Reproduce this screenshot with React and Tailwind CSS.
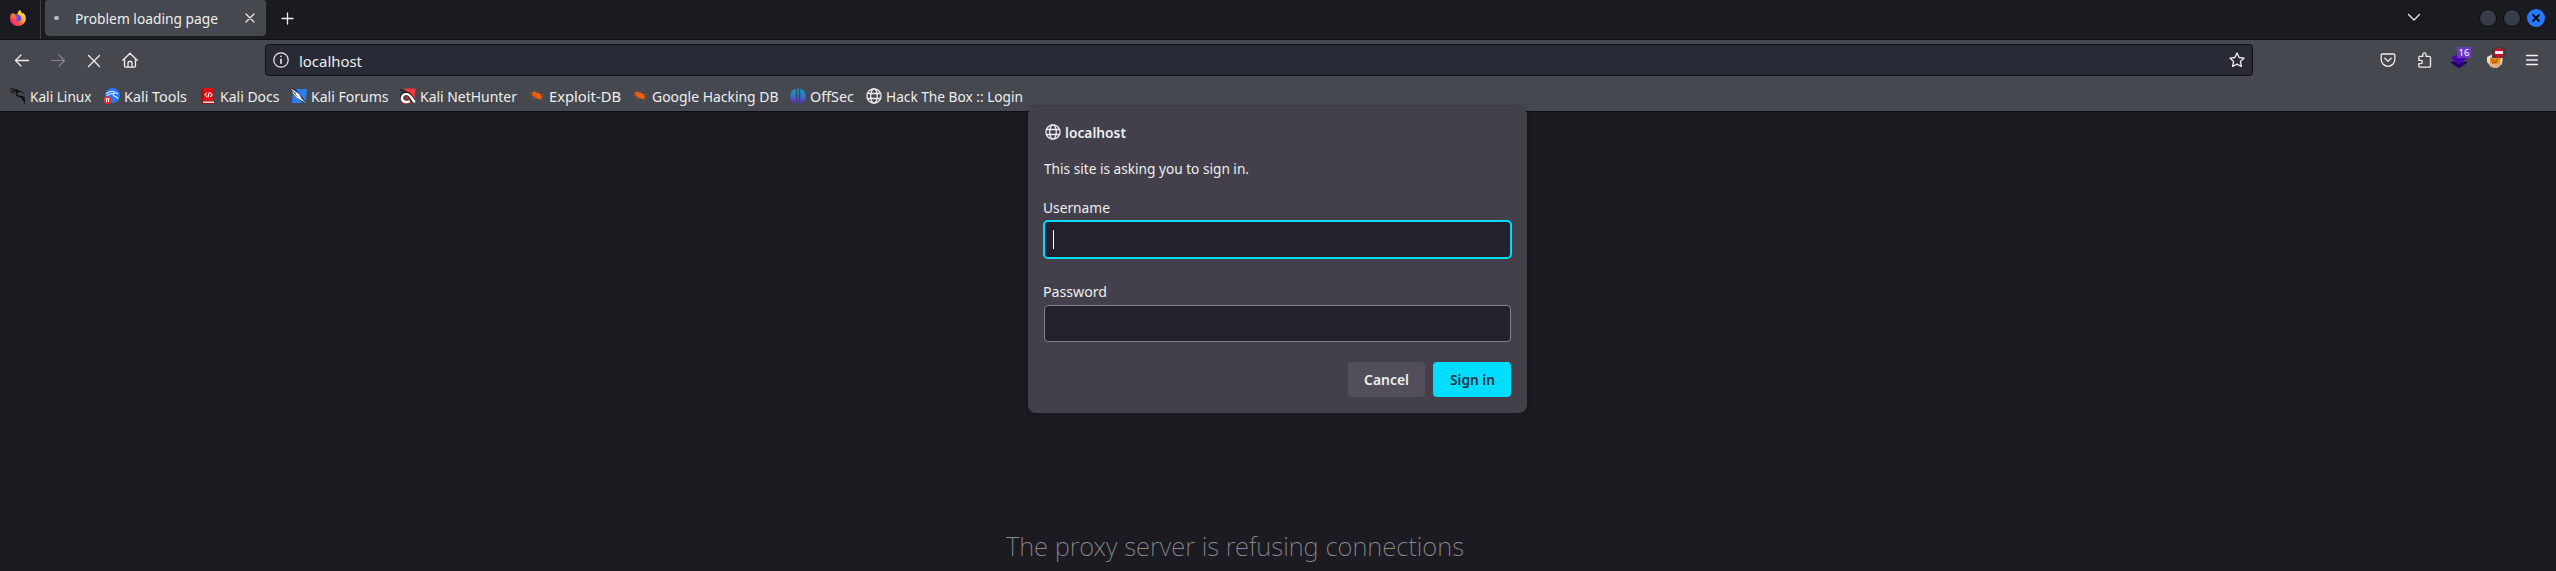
import { useLayoutEffect, useRef } from "react";

// Single line of text fitted horizontally to a given width.
function Fit({ w, className = "", children }) {
  const ref = useRef(null);
  useLayoutEffect(() => {
    const el = ref.current;
    el.style.transform = `scaleX(${w / el.getBoundingClientRect().width})`;
    return () => {
      el.style.transform = "";
    };
  }, [w]);
  return (
    <span className={`block shrink-0 whitespace-nowrap ${className}`} style={{ width: w }}>
      <span ref={ref} className="inline-block origin-left">{children}</span>
    </span>
  );
}

const line = { fill: "none", stroke: "currentColor", strokeLinecap: "round", strokeLinejoin: "round" };

function Firefox() {
  return (
    <svg className="h-4 w-4 shrink-0" viewBox="0 0 16 16">
      <defs>
        <linearGradient id="fx" x1="0.9" y1="0.1" x2="0.15" y2="0.9">
          <stop offset="0" stopColor="#fff44f" />
          <stop offset="0.4" stopColor="#ffb02a" />
          <stop offset="0.7" stopColor="#ff5a3a" />
          <stop offset="1" stopColor="#e8198a" />
        </linearGradient>
      </defs>
      <path fill="url(#fx)" d="M10 0c1 1 1.300 1.700 1.500 2.800.8.2 1.200.7 1.500 1.200V2.700C15 4.400 16 6.500 15.800 9c-.3 4-3.600 7-7.800 7-4.500 0-8-3.500-8-7.600C0 6 .8 4.300 1.900 3l.2 1.500 1.200-2 .8 1.700 3.300.3C7.500 2.600 8.500.9 10 0z" />
      <path fill="#7542e5" d="M4.500 6.200c1.300-1.500 4-1.900 5.700-.5 1.500 1.300 1.600 3.700.3 5-1.500 1.500-4 1.300-5.200-.2 1 .2 2.200 0 2.900-.7-1.500.1-2.800-.5-2.600-1.800.6-.3 1.500-.1 2 0 .4-.8.200-1-.8-1.200-.800-.2-1.500-.6-2.300-.6z" />
    </svg>
  );
}
function Globe({ className = "" }) {
  return (
    <svg className={`h-4 w-4 shrink-0 ${className}`} viewBox="0 0 16 16" {...line} strokeWidth="1.300">
      <circle cx="8" cy="8" r="7.100" />
      <ellipse cx="8" cy="8" rx="3.300" ry="7.100" />
      <path d="M1.500 5.500h13M1.500 10.500h13" />
    </svg>
  );
}
const Dragon = () => (
  <svg className="h-4 w-4 shrink-0 text-[#0c0d10]" viewBox="0 0 16 16" {...line}>
    <path strokeWidth="1" d="M.6.8C3 .6 5 1.200 7 2.500M.6 3.500C2.500 2.300 5 2.100 7 2.700M1.800 5.300C3.300 3.800 5 3.600 6.500 3.900" />
    <path strokeWidth="1.500" d="M6.500 2.300l2.700 1.200c-2 .6-3.200 2-2.800 3.300.6 1.800 2.800 1.300 4.800 1.900 2.200.6 2.800 2.200 3.300 4.300" />
    <path strokeWidth="1" d="M9 3.500c1.500-.3 2.700 0 3.700 1.200l1.300.4M11.500 8.700c1.500-.2 2.700.3 3.700 1.500M11 9.500c.3 2.300 2.300 2.300 3.200 3.800.3.700.2 1.400.1 2" />
  </svg>
);
const Tools = () => (
  <svg className="h-4 w-4 shrink-0" viewBox="0 0 16 16">
    <circle cx="8.500" cy="7.500" r="7.400" fill="#2777ff" />
    <path fill="none" stroke="#d8e6fb" strokeWidth="1.100" strokeLinecap="round" d="M2.500 5.500c3-2 5.500-2.500 7.500-2M3 7.500c2-1.500 4-2 6.500-2M9.500 3.500c2 1 .5 2-.3 3.200-.2 2 4 1.300 4.800 4M11 4.500l2.500 1" />
    <rect x="0" y="8.500" width="7" height="7.500" rx="2.500" fill="#e8262d" />
    <path stroke="#fff" strokeWidth="1" d="M1.500 10.800h4M2.600 11v3M4.500 11v3" />
  </svg>
);
const Docs = () => (
  <svg className="h-4 w-4 shrink-0" viewBox="0 0 16 16">
    <path fill="#a90c12" d="M1.500 1.500L3 0h11v13.500H1.500z" />
    <path fill="#df1016" d="M3.500 0h10v13h-10z" />
    <path fill="#e9e1df" d="M3 13.500h11v1.500H3z" />
    <path fill="#9f0a10" d="M1.500 13H3v2h11v1H2.700l-1.200-1z" />
    <path {...line} stroke="#fff" strokeWidth="1.100" d="M6.500 5L5 6.700l1.500 1.800M10.700 5l1.500 1.700-1.500 1.800M9.300 4.500L8 9" />
  </svg>
);
const Forums = () => (
  <svg className="h-4 w-4 shrink-0" viewBox="0 0 16 16">
    <path fill="#2b7cf5" d="M2.500 1H16l-1.500 14H1z" />
    <path fill="#1d2a40" d="M0 0l5 1.500L15 14l-3 1L1 5z" />
    <path fill="#f4f4f2" d="M.3.7l3.400 2 4.600 3.500 2.200 4.300 4.500 4.500-5.500-3-4-2.500L2 5.500z" />
    <path stroke="#29374d" strokeWidth=".7" d="M1 2.500l4 3M3 4.500l3 4" />
  </svg>
);
const NetHunter = () => (
  <svg className="h-4 w-4 shrink-0" viewBox="0 0 16 16">
    <path fill="#f2363b" d="M3 .5h12.500L14.500 12 9 5z" />
    <path fill="#d81d24" d="M1.500 10l10.500 5.500H2z" />
    <path fill="none" stroke="#221a20" strokeWidth="4" d="M2.300 10.500C1.500 5.500 5.500 4 9 6.500l4.500 6.500" />
    <path fill="none" stroke="#fff" strokeWidth="2.400" strokeLinecap="round" d="M9 13.500c-3 1.300-6.500.2-7-2.500C1.700 7 5 4.800 8.300 6.500c2.500 1.400 3.500 4 5.900 7" />
    <path stroke="#201a20" strokeWidth="1.300" d="M0 1.500l3.500 1.300L6 5" fill="none" />
    <path stroke="#e32329" strokeWidth="1.500" d="M5 9.500c1.500-.7 3 .5 4 2.500" fill="none" />
  </svg>
);
const Bug = () => (
  <svg className="h-4 w-4 shrink-0" viewBox="0 0 16 16">
    <path fill="#f2600c" d="M3 5c.4-1 1.700-1.500 2.900-1.200.9.200 1.400.9 2.300 1.200 1.800.2 3.200.8 3.900 2.200.6 1.200.8 2.500.4 3.600-1.500.3-2.900.1-4.200-.5C5.600 9.500 3.200 7.800 3 5z" />
    <path {...line} stroke="#a95424" strokeWidth=".7" d="M1.500 7.500l2.700-.5M3 10.500l3-1.500M5 12l2.500-2M5.500 2.500L6.700 4.500M8.500 3.500L10 5.500M12 7l2.800-.8M12.500 8.500l2.300.3M10.500 11l1 2M12.500 11l1.500 1M1.300 4.800h2" />
  </svg>
);
const OffSec = () => (
  <svg className="h-4 w-4 shrink-0" viewBox="0 0 16 16">
    <defs>
      <linearGradient id="os" x1="0" y1="0" x2="0" y2="16" gradientUnits="userSpaceOnUse">
        <stop offset="0" stopColor="#0aa5c0" />
        <stop offset=".5" stopColor="#2d78d2" />
        <stop offset="1" stopColor="#6a1fd0" />
      </linearGradient>
    </defs>
    <path fill="url(#os)" d="M5.700.8v14.400A7.500 7.500 0 0 1 5.700.8zM7.200.4h1.600v15.200H7.200zM10.300.8a7.500 7.500 0 0 1 0 14.400z" />
  </svg>
);

const bookmarks = [
  { Icon: Dragon, label: "Kali Linux", cell: "w-[94px]", w: 61.5 },
  { Icon: Tools, label: "Kali Tools", cell: "w-[95.500px]", w: 63 },
  { Icon: Docs, label: "Kali Docs", cell: "w-[91px]", w: 59.5 },
  { Icon: Forums, label: "Kali Forums", cell: "w-[109.500px]", w: 77.5 },
  { Icon: NetHunter, label: "Kali NetHunter", cell: "w-[129px]", w: 97 },
  { Icon: Bug, label: "Exploit-DB", cell: "w-[103px]", w: 72 },
  { Icon: Bug, label: "Google Hacking DB", cell: "w-[158px]", w: 126.5 },
  { Icon: OffSec, label: "OffSec", cell: "w-[76px]", w: 44 },
  { Icon: Globe, label: "Hack The Box :: Login", cell: "w-[160px]", w: 137 },
];

function TabStrip() {
  return (
    <div className="flex h-10 items-start border-b border-[#101115] bg-[#1a1b20]">
      <div className="flex h-[39px] w-[41px] items-center border-r border-[#3d3f45] pb-[3px] pl-[10px]">
        <Firefox />
      </div>
      <div className="ml-1 flex h-9 w-[221px] items-center rounded-b-[4px] rounded-t-[3px] bg-[#45484e]">
        <span className="ml-[9px] h-1 w-[5px] rounded-full bg-[#b9babc]" />
        <Fit w={143} className="ml-4 text-[14.667px]">Problem loading page</Fit>
        <svg className="ml-[27px] h-[10px] w-[10px]" viewBox="0 0 10 10" {...line} strokeWidth="1.200">
          <path d="M1 1l8 8M9 1L1 9" />
        </svg>
      </div>
      <svg className="ml-[15px] mt-3 h-[13px] w-[13px]" viewBox="0 0 13 13" {...line} strokeWidth="1.300">
        <path d="M6.500 1v11M1 6.500h11" />
      </svg>
      <svg className="ml-auto mr-[58px] mt-[13px] h-[10px] w-[14px]" viewBox="0 0 14 10" {...line} strokeWidth="1.300">
        <path d="M1.500 1.500L7 7l5.500-5.500" />
      </svg>
      <div className="mr-[11px] mt-[9px] flex gap-[6px]">
        <span className="h-[18px] w-[18px] rounded-full border border-[#0b0c0f] bg-[#363c49]" />
        <span className="h-[18px] w-[18px] rounded-full border border-[#0b0c0f] bg-[#363c49]" />
        <span className="flex h-[18px] w-[18px] items-center justify-center rounded-full bg-[#2777ff] text-[#080c18]">
          <svg className="h-2 w-2" viewBox="0 0 8 8" fill="none" stroke="currentColor" strokeWidth="2">
            <path d="M.5.5l7 7M7.500.5l-7 7" />
          </svg>
        </span>
      </div>
    </div>
  );
}

function NavBar() {
  return (
    <div className="flex h-10 items-center">
      <svg className="ml-[14px] h-4 w-4" viewBox="0 0 16 16" {...line} strokeWidth="1.300">
        <path d="M14.500 8.500H1.500M7 3L1.500 8.500 7 14" />
      </svg>
      <svg className="ml-5 h-4 w-4 text-[#85878b]" viewBox="0 0 16 16" {...line} strokeWidth="1.200">
        <path d="M1.500 8.500h13M9 3l5.500 5.500L9 14" />
      </svg>
      <svg className="ml-5 h-4 w-4" viewBox="0 0 16 16" {...line} strokeWidth="1.300">
        <path d="M2.500 3.500l11 11M13.500 3.500l-11 11" />
      </svg>
      <svg className="ml-5 h-4 w-4" viewBox="0 0 16 16" {...line} strokeWidth="1.300">
        <path d="M.9 8.300L8 1.300l7.100 7M2.500 7v6.800c0 .8.500 1.300 1.300 1.300h8.400c.8 0 1.300-.5 1.300-1.300V7M6 15v-4c0-.9.500-1.500 1.200-1.500h1.600c.7 0 1.200.6 1.200 1.500v4" />
      </svg>
      <div className="ml-[127px] flex h-8 w-[1988px] items-center rounded-[4px] border border-[#0e0f13] bg-[#282a36]">
        <svg className="ml-[7px] h-4 w-4" viewBox="0 0 16 16" {...line} strokeWidth="1.200">
          <circle cx="8" cy="8" r="7.200" />
          <path strokeWidth="1.600" d="M8 7.200v4M8 4.400v.1" />
        </svg>
        <Fit w={63} className="ml-[10px] pt-px text-[14.667px]">localhost</Fit>
        <svg className="ml-auto mr-[7px] h-4 w-4" viewBox="0 0 16 16" {...line} strokeWidth="1.300">
          <path d="M8 .9l2.100 4.600 5 .6-3.700 3.400 1 5L8 12.100l-4.400 2.400 1-5L.9 6.100l5-.6z" />
        </svg>
      </div>
      <div className="ml-auto mr-4 flex items-center">
        <svg className="mr-5 h-4 w-4" viewBox="0 0 16 16" {...line} strokeWidth="1.300">
          <path d="M2.500 2h11c.8 0 1.300.5 1.300 1.300V7.500a6.800 6.800 0 0 1-13.600 0V3.300C1.200 2.500 1.700 2 2.500 2zM4.800 6.300L8 9.400l3.200-3.100" />
        </svg>
        <svg className="mr-[17px] h-4 w-4" viewBox="0 0 16 16" {...line} strokeWidth="1.300">
          <path d="M2.800 8V5.200c0-.5.300-.9.900-.9h3.100V2.500a1.600 1.600 0 0 1 3.200 0v1.800h3.300c.7 0 1.200.5 1.200 1.200v8.400c0 .7-.5 1.200-1.200 1.200H4c-.7 0-1.200-.5-1.200-1.200v-2.200h1.900a1.700 1.700 0 0 0 0-3.400H2.800" />
        </svg>
        <div className="relative mr-4 h-5 w-5">
          <svg className="h-5 w-5" viewBox="0 0 20 20">
            <path fill="#21026b" d="M2 11.500l4 0 4 2 4-2h4v1.500l-8 5.500-8-5.500z" />
            <path fill="#4706b3" d="M10 3l8 5-8 6-8-6z" />
          </svg>
          <span className="absolute -top-[3px] left-2 flex h-[11px] w-[14px] items-center justify-center rounded-[1px] bg-[#6b3cc0] text-[9.500px] leading-none text-white">16</span>
        </div>
        <div className="relative mr-[19px] h-5 w-5">
          <svg className="h-5 w-5" viewBox="0 0 20 20">
            <path fill="#e9ddd0" d="M2 7l8-4 8 3-1 8-5 4-6-1-4-5z" />
            <path fill="#e0a878" d="M3 12l6 4 8-4-3 5-5 1-4-2z" />
            <path fill="#f58a1f" d="M5 8l4-2 4 1 3 0-1 6-5 2-5-2z" />
            <path stroke="#6b3c17" strokeWidth=".8" fill="none" d="M6 10l3 .5M10 11l3-1.500M7 13l5-1" />
          </svg>
          <span className="absolute -top-[3px] left-[7px] flex h-[11px] w-[14px] items-center justify-center bg-[#3f403f]">
            <span className="flex h-[10px] w-[10px] items-center justify-center rounded-full bg-[#c4122f]">
              <span className="h-[3px] w-2 bg-[#f4e9ec]" />
            </span>
          </span>
        </div>
        <svg className="h-4 w-4" viewBox="0 0 16 16" {...line} strokeWidth="1.300">
          <path d="M2.500 3.500h11M2.500 8h11M2.500 12.500h11" />
        </svg>
      </div>
    </div>
  );
}

function SignIn() {
  return (
    <div className="absolute left-[1028px] top-[107px] flex h-[306px] w-[499px] flex-col rounded-[8px] bg-[#43404c] px-4 text-[14.667px] shadow-[0_0_5px_rgba(0,0,0,0.35)]">
      <div className="mt-[13px] flex h-6 items-center gap-1 pl-px font-semibold">
        <Globe />
        <Fit w={61} className="pb-px">localhost</Fit>
      </div>
      <Fit w={205} className="mt-3 h-6 leading-6">This site is asking you to sign in.</Fit>
      <Fit w={67} className="-ml-px mt-[15px] h-6 leading-6">Username</Fit>
      <div className="-mx-px mt-px flex h-[39px] items-center rounded-[5px] border-2 border-[#00ddff] bg-[#23212b] pl-2">
        <span className="h-[19px] w-px bg-white" />
      </div>
      <Fit w={64} className="-ml-px mt-5 h-6 leading-6">Password</Fit>
      <div className="mt-[2px] h-[37px] rounded-[4px] border border-[#817f86] bg-[#23212b]" />
      <div className="mt-5 flex justify-end gap-2 font-semibold">
        <button className="flex h-[35px] w-[77px] items-center justify-center rounded-[4px] bg-[#524f5a]">
          <Fit w={45} className="pb-px">Cancel</Fit>
        </button>
        <button className="flex h-[35px] w-[78px] items-center justify-center rounded-[4px] bg-[#00ddff] text-[#23303d]">
          <Fit w={45} className="pb-px">Sign in</Fit>
        </button>
      </div>
    </div>
  );
}

export default function App() {
  return (
    <div className="relative flex h-[571px] w-[2556px] flex-col overflow-hidden bg-[#1c1b22] font-['Noto_Sans',sans-serif] text-[#eeeeee]">
      <TabStrip />
      <div className="h-[72px] border-b border-[#0e0f13] bg-[#45484e]">
        <NavBar />
        <div className="flex h-8 items-center pl-[10px]">
          {bookmarks.map(({ Icon, label, cell, w }) => (
            <div key={label} className={`flex shrink-0 items-center gap-1 ${cell}`}>
              <Icon />
              <Fit w={w} className="pb-px text-[14.667px]">{label}</Fit>
            </div>
          ))}
        </div>
      </div>
      <h1 className="ml-[1006px] mt-[415px] text-[26px] font-extralight leading-[38px] text-[#8b8a90]">
        <Fit w={458}>The proxy server is refusing connections</Fit>
      </h1>
      <SignIn />
    </div>
  );
}
